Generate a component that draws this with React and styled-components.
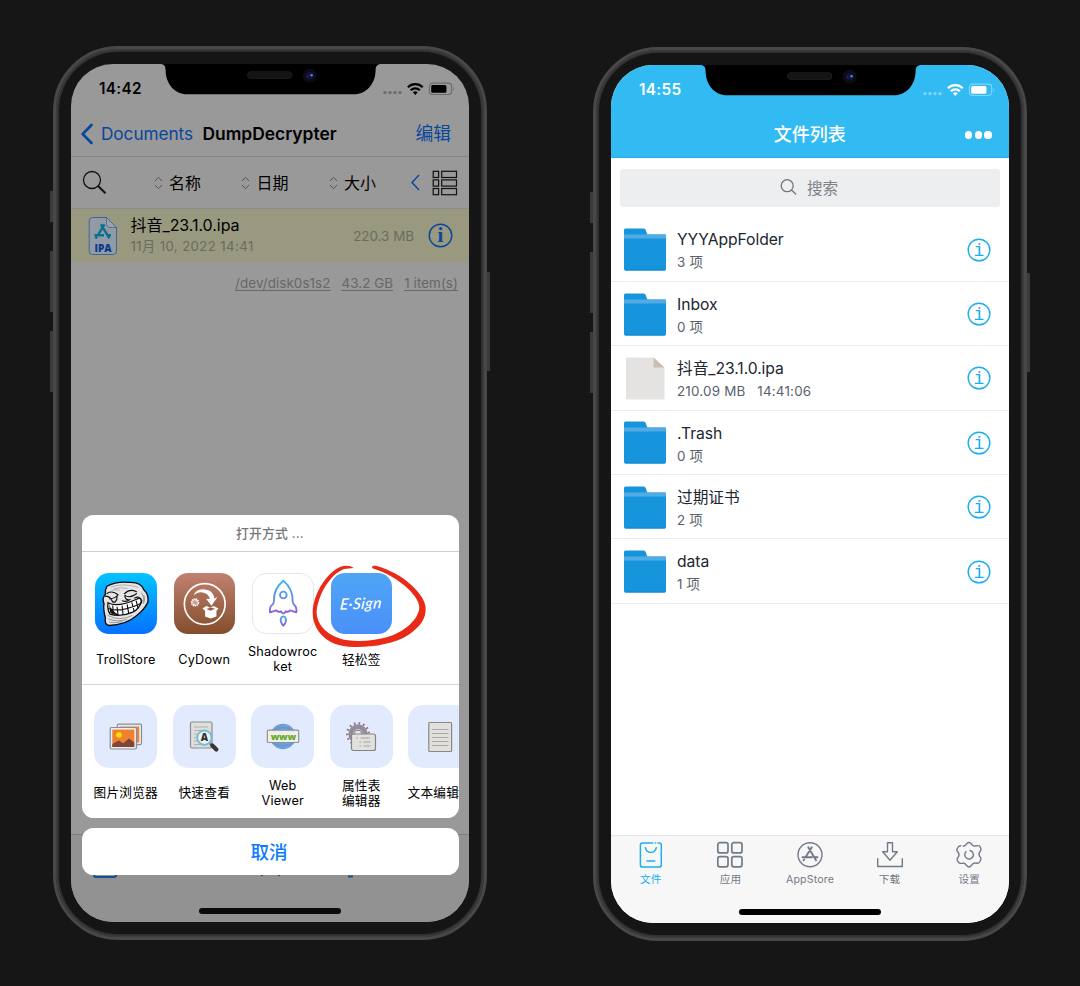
import React from 'react';
import styled, { createGlobalStyle, css } from 'styled-components';

const Global = createGlobalStyle`
  * { box-sizing: border-box; }
  body {
    margin: 0;
    background: #161616;
    font-family: Inter, "Noto Sans CJK SC", sans-serif;
    font-size: 15px;
    color: #000;
  }
  svg { display: block; flex: none; }
`;

const Stage = styled.main`
  width: 1080px;
  height: 986px;
  padding: 46px 53px;
  display: flex;
  align-items: flex-start;
  gap: 106px;
  background: #161616;
  overflow: hidden;
`;

/* ---------- device ---------- */

const Device = styled.section`
  position: relative;
  width: 434px;
  height: 894px;
  margin-top: ${(p) => p.$drop || 0}px;
  padding: 14.5px;
  border: 3.5px solid #484848;
  border-width: 3.5px;
  border-radius: 65px;
  background: #151515;
  box-shadow: inset 0 0 0 1.5px #3d3d3d, inset 0 0 0 3px #2f2f2f;
`;

const DeviceBody = styled.div`
  width: 398px;
  height: 858px;
  margin: ${(p) => p.$inset || 0}px;
`;

const SideKey = styled.i`
  position: absolute;
  width: 3px;
  background: #3b3b3b;
  top: ${(p) => p.$top}px;
  height: ${(p) => p.$len}px;
  ${(p) => (p.$right ? 'right: -6px;' : 'left: -6px;')}
`;

const Screen = styled.div`
  position: relative;
  width: 398px;
  height: 858px;
  border-radius: 42px;
  overflow: hidden;
  background: ${(p) => p.$bg};
  display: flex;
  flex-direction: column;
`;

const NotchShape = styled.svg`
  position: absolute;
  top: 0;
  left: 90px;
  z-index: 3;
`;

const StatusBar = styled.div`
  flex: none;
  height: 47px;
  padding: 2px 14.5px 0 28px;
  display: flex;
  align-items: center;
  justify-content: space-between;
  color: ${(p) => p.$color};
`;

const Clock = styled.span`
  font-size: 15.3px;
  font-weight: 600;
  line-height: 20px;
  letter-spacing: 0.35px;
`;

const HomeBar = styled.div`
  position: absolute;
  left: 128px;
  bottom: 8.5px;
  width: 142px;
  height: 5.5px;
  border-radius: 3px;
  background: ${(p) => p.$color};
  z-index: 6;
`;

function Notch() {
  return (
    <NotchShape width="220" height="31" viewBox="0 0 220 31">
      <path d="M0 0H220C217 0 214.6 2 214.6 6C214.6 20 205 30.3 193 30.3H26C14 30.3 4.6 20 4.6 6C4.6 2 3 0 0 0Z" fill="#000" />
      <rect x="86.5" y="7.7" width="44.5" height="6.8" rx="3.4" fill="#131514" stroke="#1e201f" strokeWidth="0.8" />
      <circle cx="148.7" cy="11.7" r="7" fill="#0a0c16" />
      <circle cx="148.7" cy="11.7" r="3.6" fill="#11133a" />
      <circle cx="150.6" cy="11.2" r="1.3" fill="#6a72e8" />
      <circle cx="146.5" cy="12.3" r="0.9" fill="#3a2478" />
    </NotchShape>
  );
}

function StatusIcons({ color, faint }) {
  return (
    <svg width="72" height="16" viewBox="0 0 72 16">
      {[2, 7, 12, 17].map((x) => (
        <circle key={x} cx={x} cy="11.6" r="1.7" fill={faint} />
      ))}
      <g fill="none" stroke={color} strokeWidth="2.3">
        <path d="M24.9 6.2A10.6 10.6 0 0 1 39.7 6.2" />
        <path d="M27.7 9.2A6.6 6.6 0 0 1 36.9 9.2" />
      </g>
      <path d="M29.8 11.3Q32.3 9.3 34.8 11.3L32.3 13.9Z" fill={color} />
      <rect x="46.4" y="2.1" width="22.2" height="11.4" rx="3.2" fill="none" stroke={faint} strokeWidth="1.1" />
      <rect x="48.2" y="3.9" width="15.2" height="7.8" rx="1.5" fill={color} />
      <path d="M70 5.7Q71.7 7.8 70 9.9Z" fill={faint} />
    </svg>
  );
}

function Phone({ drop, bg, children }) {
  return (
    <Device $drop={drop}>
      <SideKey $top={142} $len={31} />
      <SideKey $top={202} $len={61} />
      <SideKey $top={282} $len={61} />
      <SideKey $top={223} $len={99} $right />
      <DeviceBody $inset={0.5}>
        <Screen $bg={bg}>
          <Notch />
          {children}
        </Screen>
      </DeviceBody>
    </Device>
  );
}

/* ---------- left: document browser ---------- */

const NavBar = styled.header`
  flex: none;
  height: 46px;
  display: flex;
  align-items: center;
  padding: 0 18px 0 9.5px;
  border-bottom: 1px solid #858585;
  line-height: 24px;
`;

const BackLabel = styled.span`
  margin-left: 8.5px;
  font-size: 17.2px;
  letter-spacing: -0.05px;
  color: #08479c;
`;

const FolderTitle = styled.h1`
  margin: 0 0 0 9.5px;
  font-size: 17.4px;
  font-weight: 600;
  letter-spacing: 0;
  flex: 1;
`;

const NavAction = styled.span`
  font-size: 17.8px;
  color: #08479c;
`;

const SortBar = styled.div`
  flex: none;
  height: 52px;
  display: grid;
  grid-template-columns: 82.5px 87.5px 87.5px 82.5px 1fr;
  align-items: center;
  border-bottom: 1px solid #8c8c8c;
`;

const SearchCell = styled.div`
  padding-left: 11px;
`;

const SortCell = styled.div`
  display: flex;
  align-items: center;
  gap: 6.5px;
  font-size: 16px;
  line-height: 24px;
`;

const ViewCell = styled.div`
  display: flex;
  align-items: center;
  gap: 12px;
`;

const PickedFile = styled.div`
  flex: none;
  height: 53px;
  display: flex;
  align-items: center;
  padding: 0 16px 0 17px;
  background: #999980;
`;

const FileText = styled.div`
  flex: 1;
  margin-left: 12.5px;
`;

const FileName = styled.div`
  font-size: 16px;
  line-height: 21px;
  letter-spacing: -0.05px;
`;

const FileDate = styled.div`
  font-size: 13.2px;
  line-height: 20px;
  letter-spacing: 0.4px;
  color: #6b6b5d;
`;

const FileSize = styled.span`
  margin-right: 14px;
  font-size: 13.4px;
  letter-spacing: 0;
  color: #6b6b5d;
`;

const DiskLine = styled.div`
  flex: none;
  height: 41px;
  display: flex;
  align-items: center;
  justify-content: flex-end;
  gap: 11px;
  padding-right: 11px;
  font-size: 13.4px;
  letter-spacing: 0.08px;
  color: #676767;
  span { text-decoration: underline; text-underline-offset: 2px; }
`;

const LowerBar = styled.div`
  margin-top: auto;
  height: 88px;
  border-top: 1px solid #7f7f7f;
  background: #929292;
  padding: 22px 0 0 21px;
`;

const ShareSheet = styled.div`
  position: absolute;
  left: 10.5px;
  top: 451px;
  width: 377px;
  display: flex;
  flex-direction: column;
  gap: 10px;
  z-index: 5;
`;

const SheetCard = styled.div`
  height: 303px;
  border-radius: 11.5px;
  background: #fff;
  overflow: hidden;
`;

const SheetTitle = styled.div`
  height: 37px;
  border-bottom: 1px solid #cfcfcf;
  text-align: center;
  font-size: 12.8px;
  font-weight: 500;
  line-height: 37px;
  letter-spacing: 0.2px;
  color: #777;
`;

const IconStrip = styled.div`
  display: flex;
  width: 500px;
  padding-left: 5px;
  ${(p) =>
    p.$ruled
      ? css`height: 133px; padding-top: 20.5px; border-bottom: 1.5px solid #d4d4d4;`
      : css`padding-top: 20px;`}
`;

const Entry = styled.div`
  width: 78.5px;
  flex: none;
  display: flex;
  flex-direction: column;
  align-items: center;
`;

const AppTile = styled.div`
  width: 61.5px;
  height: 61.5px;
  border-radius: 14px;
  overflow: hidden;
  background: ${(p) => p.$fill};
  border: ${(p) => (p.$outlined ? '1px solid #e6e6e6' : '0')};
  display: flex;
  align-items: center;
  justify-content: center;
`;

const ActionTile = styled.div`
  width: 63px;
  height: 63px;
  border-radius: 15px;
  background: #e2eafe;
  display: flex;
  align-items: center;
  justify-content: center;
`;

const EntryLabel = styled.div`
  height: 32px;
  margin-top: ${(p) => p.$gap}px;
  display: flex;
  align-items: center;
  justify-content: center;
  text-align: center;
  white-space: pre;
  font-size: 12.7px;
  line-height: 14.8px;
  letter-spacing: 0.2px;
`;

const ScriptMark = styled.span`
  font-family: Lato, cursive;
  font-style: italic;
  font-weight: 500;
  font-size: 15.5px;
  letter-spacing: 0.4px;
  color: #fff;
  transform: rotate(-2deg) skewX(-8deg);
`;

const Cancel = styled.button`
  height: 47px;
  border: 0;
  border-radius: 11.5px;
  background: #fff;
  color: #0a7aff;
  font: 500 18.6px/46px Inter, "Noto Sans CJK SC", sans-serif;
  padding: 0 2px 0 0;
`;

const InkRing = styled.svg`
  position: absolute;
  left: 158px;
  top: 45px;
`;

function IpaIcon() {
  return (
    <svg width="30" height="40" viewBox="0 0 30 40">
      <path d="M4.5 1.5H18.5L28.5 11.5V35Q28.5 38.5 25 38.5H4.5Q1.2 38.5 1.2 35V5Q1.2 1.5 4.5 1.5Z" fill="#929aa6" stroke="#385e9b" strokeWidth="0.9" />
      <path d="M18.5 1.5V8Q18.5 11.5 22 11.5H28.5Z" fill="#9da2aa" stroke="#385e9b" strokeWidth="0.7" />
      <g stroke="#087090" strokeWidth="2.4" fill="none">
        <path d="M6.5 19.3H16M18.5 19.3H23M16.4 8.3L9.8 19.3M12.9 8.3L21.4 22.4M8.8 20.6L7.6 22.6" />
      </g>
      <text x="15" y="36" textAnchor="middle" fontFamily="Open Sans" fontWeight="800" fontSize="10.5" textLength="17" lengthAdjust="spacingAndGlyphs" fill="#0a3a8f">IPA</text>
    </svg>
  );
}

function InfoBadge({ size, color, font = 'Liberation Serif', weight = 700, glyph = 20 }) {
  return (
    <svg width={size} height={size} viewBox="0 0 24 24">
      <circle cx="12" cy="12" r="10.8" fill="none" stroke={color} strokeWidth="1.4" />
      <text x="12" y={12 + glyph * 0.33} textAnchor="middle" fontFamily={font} fontWeight={weight} fontSize={glyph} fill={color}>i</text>
    </svg>
  );
}

function Sorter() {
  return (
    <svg width="9" height="14" viewBox="0 0 9 14" fill="none" stroke="#555" strokeWidth="1">
      <path d="M1 5L4.5 1.3L8 5M1 9L4.5 12.7L8 9" />
    </svg>
  );
}

function Troll() {
  return (
    <svg width="61.5" height="61.5" viewBox="0 0 184 184">
      <path d="M36 39Q66 24 102 28Q138 26 146 50Q162 64 158 88Q146 112 124 128Q92 156 42 157Q28 154 31 134Q24 108 27 92Q20 76 31 64Q30 48 36 39Z" fill="#e5e5e5" stroke="#0b0b0b" strokeWidth="4" />
      <path d="M46 42Q85 29 130 43M56 47Q77 42 97 46M50 52Q62 48 76 52" stroke="#aaa" strokeWidth="2.5" fill="none" />
      <path d="M36 61Q52 51 69 65Q61 76 44 77M88 62Q104 46 124 56M90 67Q104 77 124 62M89 69Q92 82 103 80Q94 88 82 83M66 70Q67 80 60 87Q51 88 50 81M31 69Q45 70 48 79M119 75Q132 67 140 82Q140 89 135 94" fill="none" stroke="#111" strokeWidth="3.5" strokeLinecap="round" />
      <path d="M39 89Q66 105 128 77Q139 73 138 85Q134 107 113 117Q76 133 45 123Q36 109 39 89Z" fill="#fff" stroke="#0c0c0c" strokeWidth="4" />
      <path d="M40 106Q74 120 137 91M53 97L55 124M66 101L69 127M81 98L84 126M96 94L101 121M110 88L117 114M123 83L129 106" fill="none" stroke="#171717" strokeWidth="3.5" />
      <path d="M38 127Q75 146 112 127M40 137Q68 148 95 139M139 59Q149 72 144 92M42 147Q63 151 82 145M146 66Q150 77 147 88" fill="none" stroke="#747474" strokeWidth="2" />
      <path d="M42 93L46 120Q59 128 72 126L60 118L47 105Z" fill="#111" />
    </svg>
  );
}

function BoxDrop() {
  return (
    <svg width="61.5" height="61.5" viewBox="0 0 184 184">
      <circle cx="92" cy="93" r="61" fill="none" stroke="#fff" strokeWidth="5" />
      <path d="M58 68Q67 46 92 49Q117 51 121 76L130 72L112 98L96 77L107 78Q103 60 86 58Q70 55 58 68Z" fill="#fff" />
      <circle cx="63" cy="88" r="10" fill="#e9cabd" stroke="#fff" strokeWidth="5" strokeDasharray="4 2" />
      <path d="M55 84L71 94M60 79L67 97M54 91L73 86" stroke="#b98270" strokeWidth="2" />
      <path d="M85 106L97 99L108 104L119 99L133 106L127 113V130L110 136L93 130V113Z" fill="#fff" />
      <path d="M97 108L109 113L123 107L110 103Z" fill="#92604d" />
    </svg>
  );
}

function Rocket() {
  return (
    <svg width="60" height="60" viewBox="0 0 180 180" fill="none" stroke="url(#flame)" strokeWidth="5.6" strokeLinejoin="round">
      <defs>
        <linearGradient id="flame" gradientUnits="userSpaceOnUse" x1="90" y1="20" x2="90" y2="158">
          <stop offset="0" stopColor="#35b7ed" />
          <stop offset="0.55" stopColor="#7580df" />
          <stop offset="0.72" stopColor="#9358dc" />
          <stop offset="0.78" stopColor="#42b4e8" />
          <stop offset="1" stopColor="#895fe0" />
        </linearGradient>
      </defs>
      <path d="M91 23Q61 48 63 83Q63 91 57 96Q49 102 51 118L70 112Q74 119 84 115Q91 128 98 115Q107 119 111 112L130 118Q132 103 124 96Q118 91 119 83Q120 48 91 23Z" />
      <circle cx="91" cy="66" r="10" />
      <path d="M86 132Q91 129 96 132Q104 144 91 158Q78 144 86 132Z" />
    </svg>
  );
}

function PhotosIcon() {
  return (
    <svg width="34" height="28" viewBox="0 0 34 28">
      <rect x="8.2" y="1.2" width="24.3" height="20.5" rx="1.5" fill="#ececec" stroke="#858e99" strokeWidth="1.2" />
      <rect x="10.5" y="3.5" width="19.7" height="16" fill="#f0812f" />
      <rect x="1.2" y="4.5" width="26.3" height="21.5" rx="1.5" fill="#ececec" stroke="#858e99" strokeWidth="1.2" />
      <rect x="3.3" y="6.6" width="22" height="17.3" fill="#f0812f" />
      <circle cx="10" cy="12" r="2.8" fill="#ffe000" />
      <path d="M3.3 21L9.7 17.5L14.2 20.3L20 15.5L25.3 19.5V24H3.3Z" fill="#804638" />
    </svg>
  );
}

function QuickLookIcon() {
  return (
    <svg width="30" height="31" viewBox="0 0 30 31">
      <rect x="1.5" y="1" width="21.5" height="26" rx="1.5" fill="#dededb" stroke="#8a8d90" strokeWidth="1.2" />
      <path d="M5 6H19M5 9.5H13M5 13H9M5 16.5H9M5 20H10M5 23.5H13" stroke="#b1b1ad" />
      <path d="M20.5 22L23.2 25" stroke="#777" strokeWidth="2" />
      <path d="M23.3 24.5L27.3 28.5" stroke="#393735" strokeWidth="4.2" strokeLinecap="round" />
      <circle cx="15.4" cy="16.7" r="7.2" fill="#edf1ef" stroke="#78bdd5" strokeWidth="2" />
      <text x="15.4" y="20.4" textAnchor="middle" fontFamily="Open Sans" fontSize="10" fontWeight="800" fill="#333">A</text>
    </svg>
  );
}

function WebIcon() {
  return (
    <svg width="34" height="27" viewBox="0 0 34 27">
      <circle cx="17" cy="13.5" r="12.7" fill="#6ea0dc" />
      <path d="M6 7Q17 2 28 7M6 20Q17 25 28 20" fill="none" stroke="#5b90d0" strokeWidth="0.8" />
      <rect x="1.3" y="7.2" width="31.4" height="12.3" rx="1.3" fill="#edf0ea" stroke="#8e9296" strokeWidth="1.2" />
      <text x="4.7" y="16.7" fontFamily="Open Sans" fontSize="9.5" fontWeight="800" textLength="25.4" fill="#69a929">www</text>
    </svg>
  );
}

function PropertiesIcon() {
  return (
    <svg width="32" height="32" viewBox="0 0 32 32">
      <circle cx="13" cy="13" r="10.8" fill="none" stroke="#8d7594" strokeWidth="2.5" strokeDasharray="1.6 3.05" />
      <circle cx="13" cy="13" r="7.2" fill="none" stroke="#938e94" strokeWidth="5" />
      <circle cx="13" cy="13" r="3.8" fill="#e2eafe" stroke="#8d6f91" strokeWidth="1" />
      <rect x="6.5" y="13" width="24" height="16.5" rx="2" fill="#e1e0dc" stroke="#85857f" strokeWidth="1.2" />
      <path d="M11.5 17H13M15.5 17H24.5M14.5 21H16M18.5 21H25.5M14.5 25H16M18.5 25H25.5" stroke="#a5a49f" strokeWidth="1.1" />
    </svg>
  );
}

function TextDocIcon() {
  return (
    <svg width="26" height="32" viewBox="0 0 26 32">
      <rect x="1.8" y="1.5" width="22.8" height="29" rx="1" fill="#e1e0dc" stroke="#898984" strokeWidth="1.2" />
      <path d="M5 8.5H21.5M5 12.5H21.5M5 16.5H21.5M5 20.5H21.5M5 24.5H21.5" stroke="#aaa9a4" />
    </svg>
  );
}

const openWith = [
  { label: 'TrollStore', fill: 'linear-gradient(#03c4ff, #0671ff)', art: <Troll /> },
  { label: 'CyDown', fill: 'linear-gradient(#c18170, #834e2c)', art: <BoxDrop /> },
  { label: 'Shadowroc\nket', fill: '#fff', outlined: true, art: <Rocket /> },
  { label: '轻松签', fill: 'linear-gradient(#50a5f6, #4990f8)', art: <ScriptMark>E·Sign</ScriptMark> },
];

const viewers = [
  ['图片浏览器', PhotosIcon],
  ['快速查看', QuickLookIcon],
  ['Web\nViewer', WebIcon],
  ['属性表\n编辑器', PropertiesIcon],
  ['文本编辑器', TextDocIcon],
];

function DocumentsPhone() {
  return (
    <Phone bg="#999">
      <StatusBar $color="#000">
        <Clock>14:42</Clock>
        <StatusIcons color="#000" faint="#6c6c6c" />
      </StatusBar>
      <NavBar>
        <svg width="12" height="22" viewBox="0 0 12 22">
          <path d="M10.5 2L1.7 11L10.5 20" fill="none" stroke="#08479c" strokeWidth="2.6" strokeLinecap="round" strokeLinejoin="round" />
        </svg>
        <BackLabel>Documents</BackLabel>
        <FolderTitle>DumpDecrypter</FolderTitle>
        <NavAction>编辑</NavAction>
      </NavBar>
      <SortBar>
        <SearchCell>
          <svg width="25" height="25" viewBox="0 0 25 25" fill="none" stroke="#111" strokeWidth="1.3">
            <circle cx="10" cy="10" r="8.5" />
            <path d="M16.3 16.3L23.5 23.3" strokeWidth="2" />
          </svg>
        </SearchCell>
        {['名称', '日期', '大小'].map((t) => (
          <SortCell key={t}>
            <Sorter />
            {t}
          </SortCell>
        ))}
        <ViewCell>
          <svg width="9" height="17" viewBox="0 0 9 17">
            <path d="M8 1L1 8.5L8 16" fill="none" stroke="#08479c" strokeWidth="1.4" />
          </svg>
          <svg width="26" height="26" viewBox="0 0 26 26" fill="none" stroke="#111" strokeWidth="1.2">
            {[1.3, 9.9, 18.5].map((y) => (
              <React.Fragment key={y}>
                <rect x="1.2" y={y} width="5.4" height="6.2" />
                <rect x="9.7" y={y} width="14.8" height="6.2" />
              </React.Fragment>
            ))}
          </svg>
        </ViewCell>
      </SortBar>
      <PickedFile>
        <IpaIcon />
        <FileText>
          <FileName>抖音_23.1.0.ipa</FileName>
          <FileDate>11月 10, 2022 14:41</FileDate>
        </FileText>
        <FileSize>220.3 MB</FileSize>
        <InfoBadge size={25} color="#08479c" />
      </PickedFile>
      <DiskLine>
        <span>/dev/disk0s1s2</span>
        <span>43.2 GB</span>
        <span>1 item(s)</span>
      </DiskLine>
      <LowerBar>
        <svg width="270" height="22" viewBox="0 0 270 22" fill="none" stroke="#155192" strokeWidth="2">
          <path d="M2 1V18Q2 20 4 20H22Q24 20 24 18V1M170 13V19M187 13V19M256 19.5H261" />
        </svg>
      </LowerBar>
      <ShareSheet>
        <SheetCard>
          <SheetTitle>打开方式 ...</SheetTitle>
          <IconStrip $ruled>
            {openWith.map((a) => (
              <Entry key={a.label}>
                <AppTile $fill={a.fill} $outlined={a.outlined}>{a.art}</AppTile>
                <EntryLabel $gap={10}>{a.label}</EntryLabel>
              </Entry>
            ))}
          </IconStrip>
          <IconStrip>
            {viewers.map(([label, Art]) => (
              <Entry key={label}>
                <ActionTile><Art /></ActionTile>
                <EntryLabel $gap={9.5}>{label}</EntryLabel>
              </Entry>
            ))}
          </IconStrip>
        </SheetCard>
        <Cancel>取消</Cancel>
        <InkRing width="200" height="90" viewBox="0 0 600 270">
          <path
            d="M341 24C330 15 315 16 300 21C255 42 219 107 218 158C218 202 251 260 342 261C402 262 463 251 505 225C540 200 559 176 557 143C555 105 494 40 407 17C396 16 392 22 401 26C462 43 536 101 538 141C538 177 491 218 440 232C403 242 360 246 324 241C262 232 228 192 230 153C235 105 269 43 312 27Z"
            fill="#e92a16"
          />
        </InkRing>
      </ShareSheet>
      <HomeBar $color="#0b0b0b" />
    </Phone>
  );
}

/* ---------- right: file list ---------- */

const BlueHead = styled.header`
  flex: none;
  height: 93px;
  background: #32bbf3;
  border-bottom: 1px solid #28aeea;
`;

const HeadRow = styled.div`
  height: 46px;
  display: grid;
  grid-template-columns: 1fr auto 1fr;
  align-items: center;
  padding: 0 17.5px 0 17px;
`;

const HeadTitle = styled.h1`
  grid-column: 2;
  margin: 0;
  font-size: 18px;
  font-weight: 500;
  line-height: 26px;
  color: #fff;
`;

const MoreDots = styled.div`
  justify-self: end;
  display: flex;
  gap: 2.5px;
  &::before, &::after, i { content: ''; width: 7.2px; height: 7.2px; border-radius: 50%; background: #fff; }
`;

const SearchBox = styled.div`
  flex: none;
  height: 38px;
  margin: 10.5px 9px 11px;
  padding: 0 2px 2px 0;
  border-radius: 3.5px;
  background: #edeef0;
  display: flex;
  align-items: center;
  justify-content: center;
  gap: 10px;
  font-size: 15.6px;
  color: #808287;
`;

const FileRow = styled.div`
  flex: none;
  height: 64.4px;
  display: flex;
  align-items: center;
  padding: 1px 18px 0 13px;
  border-bottom: 1px solid #ececee;
`;

const RowText = styled.div`
  flex: 1;
  padding: 3.5px 0 0 11px;
`;

const RowName = styled.div`
  font-size: 15.7px;
  line-height: 23px;
  letter-spacing: -0.05px;
  color: #20262f;
`;

const RowMeta = styled.div`
  font-size: 13.4px;
  line-height: 23px;
  letter-spacing: 0.2px;
  color: #59616d;
  white-space: pre;
`;

const TabBar = styled.nav`
  margin-top: auto;
  height: 88.5px;
  padding-top: 5px;
  display: grid;
  grid-template-columns: repeat(5, 1fr);
  align-items: start;
  background: #f7f7f7;
  border-top: 1px solid #e6e6e6;
`;

const Tab = styled.div`
  display: flex;
  flex-direction: column;
  align-items: center;
  gap: 2px;
  color: ${(p) => (p.$active ? '#1cb0ee' : '#737a87')};
  font-size: 10.6px;
  line-height: 18px;
  letter-spacing: 0.15px;
`;

function FolderIcon() {
  return (
    <svg width="42" height="43" viewBox="0 0 42 43">
      <path d="M0 2Q0 0.5 1.5 0.5H19.8Q21.2 0.5 21.7 2L23.3 6.5H40.5Q42 6.5 42 8V41Q42 42.5 40.5 42.5H1.5Q0 42.5 0 41Z" fill="#1695dc" />
      <rect y="6.5" width="42" height="4" fill="#50ace3" />
      <path d="M1 42H41" stroke="#0a85d1" />
    </svg>
  );
}

function PlainFileIcon() {
  return (
    <svg width="42" height="43" viewBox="0 0 42 43">
      <path d="M3.5 0.5H29.5L40.5 10.5V41Q40.5 42.5 39 42.5H3.5Q2 42.5 2 41V2Q2 0.5 3.5 0.5Z" fill="#e4e3e1" />
      <path d="M29.5 0.5L40.5 10.5H30.5Q29.5 10.5 29.5 9.5Z" fill="#c8bfb3" />
    </svg>
  );
}

function TabGlyph({ kind }) {
  return (
    <svg width="28" height="28" viewBox="0 0 28 28" fill="none" stroke="currentColor" strokeWidth="1.4" strokeLinecap="round" strokeLinejoin="round">
      {kind === 'files' && (
        <g strokeWidth="1.5">
          <path d="M15.7 1.9H5.5Q3.4 1.9 3.4 4V24Q3.4 26.1 5.5 26.1H22.2Q24.3 26.1 24.3 24V4Q24.3 1.9 22.2 1.9H21M18.3 1.9H18.6" />
          <path d="M8.4 6.7Q9.3 11.5 13.8 11.5Q18.3 11.5 19.3 6.7M10 20H17.8" />
        </g>
      )}
      {kind === 'apps' && (
        <g strokeWidth="1.7">
          <rect x="1.8" y="1.7" width="10.2" height="10.2" rx="2" />
          <rect x="15.8" y="1.7" width="10.2" height="10.2" rx="2" />
          <rect x="1.8" y="15.6" width="10.2" height="10.2" rx="2" />
          <rect x="15.8" y="15.6" width="10.2" height="10.2" rx="2" />
        </g>
      )}
      {kind === 'store' && (
        <>
          <circle cx="14" cy="13.8" r="12" />
          <g strokeWidth="1.9">
            <path d="M6.5 16.3H16M19 16.3H21.5M15.8 6.2L9.5 16.3M12.3 6.2L20 19.3M8.2 18.5L7.6 19.3" />
          </g>
        </>
      )}
      {kind === 'download' && (
        <path d="M11.5 1.7H16.5V10.7H21.3L14 19.3L6.7 10.7H11.5ZM1.7 17.7V25.5H26.3V17.7" />
      )}
      {kind === 'settings' && (
        <>
          <path d="M12.5 2Q14 1 15.5 2L17.5 4.3Q18.6 5.4 20 5L22.7 4.6Q24.7 4.4 25.5 6.4L26 8.2Q26 9.3 25 10.5Q23.2 12.5 24.5 15Q26.5 17.2 25.8 18.8L24.7 21Q24 22.2 22.4 22.2Q18.5 21.4 17.4 23.2L15.5 25.4Q14 26.6 12.5 25.4L10.5 23.2Q9.4 21.8 7.5 22.2L5.2 22.4Q3.9 22.1 3.2 20.8L2.1 18.8Q1.8 17.5 3.1 16.2Q4.9 13.9 3.3 11.5Q1.2 9.3 2 8L3.2 6Q4.1 4.6 5.8 4.7M8.3 5.2Q9.6 5.1 10.6 4L12.5 2" />
          <path d="M15 9.5A4.3 4.3 0 1 1 11 10.7" />
        </>
      )}
    </svg>
  );
}

const files = [
  ['YYYAppFolder', '3 项'],
  ['Inbox', '0 项'],
  ['抖音_23.1.0.ipa', '210.09 MB   14:41:06', true],
  ['.Trash', '0 项'],
  ['过期证书', '2 项'],
  ['data', '1 项'],
];

const tabs = [
  ['files', '文件'],
  ['apps', '应用'],
  ['store', 'AppStore'],
  ['download', '下载'],
  ['settings', '设置'],
];

function FileListPhone() {
  return (
    <Phone bg="#fff" drop={1}>
      <BlueHead>
        <StatusBar $color="#fff">
          <Clock>14:55</Clock>
          <StatusIcons color="#fff" faint="#80d5f8" />
        </StatusBar>
        <HeadRow>
          <HeadTitle>文件列表</HeadTitle>
          <MoreDots><i /></MoreDots>
        </HeadRow>
      </BlueHead>
      <SearchBox>
        <svg width="17" height="17" viewBox="0 0 17 17" fill="none" stroke="#72757b" strokeWidth="1.3" strokeLinecap="round">
          <circle cx="7.2" cy="7.7" r="6" />
          <path d="M11.7 12.2L15.7 16" />
        </svg>
        搜索
      </SearchBox>
      {files.map(([name, meta, plain]) => (
        <FileRow key={name}>
          {plain ? <PlainFileIcon /> : <FolderIcon />}
          <RowText>
            <RowName>{name}</RowName>
            <RowMeta>{meta}</RowMeta>
          </RowText>
          <InfoBadge size={24} color="#1aaef0" font="Liberation Mono" weight={400} glyph={18} />
        </FileRow>
      ))}
      <TabBar>
        {tabs.map(([kind, label]) => (
          <Tab key={kind} $active={kind === 'files'}>
            <TabGlyph kind={kind} />
            {label}
          </Tab>
        ))}
      </TabBar>
      <HomeBar $color="#000" />
    </Phone>
  );
}

export default function App() {
  return (
    <>
      <Global />
      <Stage>
        <DocumentsPhone />
        <FileListPhone />
      </Stage>
    </>
  );
}
